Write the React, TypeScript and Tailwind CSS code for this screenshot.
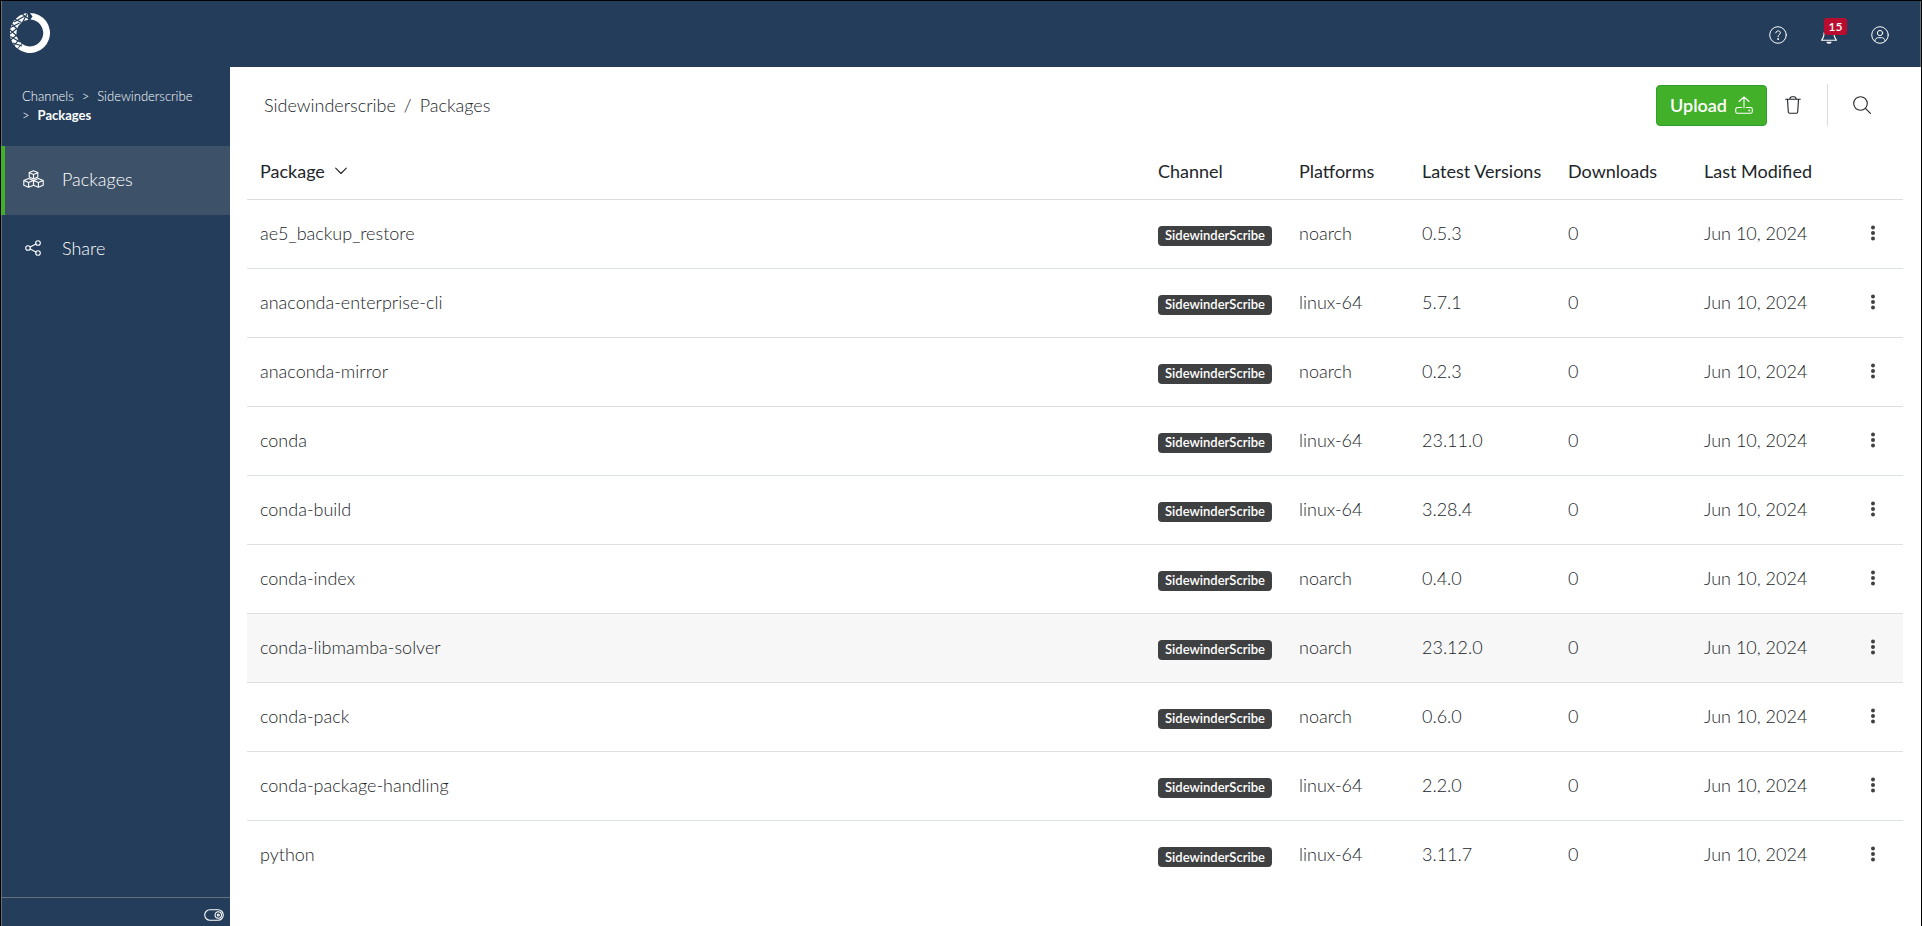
import React from 'react'

interface PackageRow {
  name: string
  platform: string
  version: string
}

const packages: PackageRow[] = [
  { name: 'ae5_backup_restore', platform: 'noarch', version: '0.5.3' },
  { name: 'anaconda-enterprise-cli', platform: 'linux-64', version: '5.7.1' },
  { name: 'anaconda-mirror', platform: 'noarch', version: '0.2.3' },
  { name: 'conda', platform: 'linux-64', version: '23.11.0' },
  { name: 'conda-build', platform: 'linux-64', version: '3.28.4' },
  { name: 'conda-index', platform: 'noarch', version: '0.4.0' },
  { name: 'conda-libmamba-solver', platform: 'noarch', version: '23.12.0' },
  { name: 'conda-pack', platform: 'noarch', version: '0.6.0' },
  { name: 'conda-package-handling', platform: 'linux-64', version: '2.2.0' },
  { name: 'python', platform: 'linux-64', version: '3.11.7' },
]

const activePackage = 'conda-libmamba-solver'

interface IconProps {
  className?: string
  viewBox?: string
  children: React.ReactNode
}

function Icon({ className, viewBox = '0 0 20 20', children }: IconProps) {
  return (
    <svg
      className={className}
      viewBox={viewBox}
      fill="none"
      stroke="currentColor"
      strokeWidth="1.1"
      strokeLinecap="round"
      strokeLinejoin="round"
      aria-hidden="true"
    >
      {children}
    </svg>
  )
}

function Logo() {
  return (
    <svg className="size-10" viewBox="0 0 40 40" aria-hidden="true">
      <path
        d="M20 0 A20 20 0 1 1 8 36 L12.200 31 A13.400 13.400 0 1 0 20.500 6.600 L22.500 3.500 Z"
        fill="#fff"
      />
      <path
        d="M18 3.400 A16.700 16.700 0 0 0 9.500 33"
        fill="none"
        stroke="#fff"
        strokeWidth="6.600"
      />
      <g stroke="#233d5b" strokeWidth="1.200" fill="none">
        <path d="M17.500 0 L12.500 9.500 M12 1 L19.500 6.500 M11.500 9.500 L4.500 6 M15 3 L4 9 M9.500 10 L.5 14.500 M1.500 10.500 L8 17 M7.500 15 L0 21 M0 17 L7.500 23.500 M7.500 21.500 L0 27.500 M.5 23.500 L10 29 M8.500 27 L3 34 M3 30 L12 33" />
      </g>
    </svg>
  )
}

function HelpIcon() {
  return (
    <Icon className="size-[18px]">
      <circle cx="10" cy="10" r="9.200" />
      <path d="M7.500 7.600 C7.600 4.600 12.600 4.600 12.600 7.600 C12.600 9.600 10 9.500 10 12" />
      <circle cx="10" cy="14.500" r=".5" fill="currentColor" />
    </Icon>
  )
}

function BellIcon() {
  return (
    <Icon className="size-[18px]" viewBox="0 0 18 18">
      <path d="M9 1 V2.500 M9 2.500 C5.800 2.500 4 5 4 8 C4 11.500 2.500 12.500 1.500 14.300 H16.500 C15.500 12.500 14 11.500 14 8 C14 5 12.200 2.500 9 2.500 Z" />
      <path d="M7 16.300 C7.600 17.600 10.400 17.600 11 16.300 Z" />
    </Icon>
  )
}

function UserIcon() {
  return (
    <Icon className="size-[18px]">
      <circle cx="10" cy="10" r="9.200" />
      <circle cx="10" cy="7.800" r="2.900" />
      <path d="M4.300 16.500 C4.800 13.800 6.500 13 8.300 13 H11.700 C13.500 13 15.200 13.800 15.700 16.500" />
    </Icon>
  )
}

function CubesIcon() {
  return (
    <Icon className="h-[18px] w-[21px]" viewBox="0 0 21 18">
      <path d="M10.500 .8 L14.800 2.600 V7 L10.500 9 L6.200 7 V2.600 Z M6.400 2.700 L10.500 4.500 L14.600 2.700 M10.500 4.500 V9" />
      <path d="M5.600 8.600 L10.500 10.500 V15.300 L5.600 17.300 L.8 15.300 V10.500 Z M.9 10.600 L5.600 12.500 L10.300 10.600 M5.600 12.500 V17" />
      <path d="M15.400 8.600 L20.200 10.500 V15.300 L15.400 17.300 L10.500 15.300 V10.500 Z M10.600 10.600 L15.400 12.500 L20.100 10.600 M15.400 12.500 V17" />
    </Icon>
  )
}

function ShareIcon() {
  return (
    <Icon className="size-4" viewBox="0 0 16 16">
      <circle cx="3" cy="8" r="2.300" />
      <circle cx="13" cy="3" r="2.300" />
      <circle cx="13" cy="13" r="2.300" />
      <path d="M5.200 7 L10.900 4 M5.200 9 L10.900 12" />
    </Icon>
  )
}

function UploadIcon() {
  return (
    <Icon className="size-[18px]" viewBox="0 0 18 18">
      <path d="M9 12 V1 M4 5.500 L9 .8 L14 5.500" />
      <path d="M6.500 11.500 H2.500 C1.500 11.500 .7 12.300 .7 13.300 V15.500 C.7 16.500 1.500 17.300 2.500 17.300 H15.500 C16.500 17.300 17.300 16.500 17.300 15.500 V13.300 C17.300 12.300 16.500 11.500 15.500 11.500 H11.500" />
      <circle cx="14.300" cy="14.400" r=".4" fill="currentColor" />
    </Icon>
  )
}

function TrashIcon() {
  return (
    <Icon className="h-[18px] w-4" viewBox="0 0 16 18">
      <path d="M.7 3.200 H15.300 M2.500 3.400 L3.300 16 C3.400 16.900 3.900 17.300 4.700 17.300 H11.300 C12.100 17.300 12.600 16.900 12.700 16 L13.500 3.400 M4.800 3 C5 1.500 5.800 .7 7 .7 H9 C10.200 .7 11 1.500 11.200 3" />
    </Icon>
  )
}

function SearchIcon() {
  return (
    <Icon className="size-[18px]" viewBox="0 0 18 18">
      <circle cx="7.500" cy="7.500" r="6.800" />
      <path d="M12.400 12.400 L17.400 17.400" />
    </Icon>
  )
}

function KebabIcon() {
  return (
    <svg className="size-4" viewBox="0 0 16 16" fill="currentColor" aria-hidden="true">
      <circle cx="8" cy="2.500" r="2" />
      <circle cx="8" cy="8" r="2" />
      <circle cx="8" cy="13.500" r="2" />
    </svg>
  )
}

function TopBar() {
  return (
    <header className="flex h-[66px] shrink-0 items-center justify-between border-x border-[#66707a] bg-[#233d5b] pr-[31px] pb-0.5 pl-2 text-white">
      <a href="#home" aria-label="Home">
        <Logo />
      </a>
      <div className="flex items-center gap-[33px] pt-1">
        <button type="button" aria-label="Help">
          <HelpIcon />
        </button>
        <button type="button" aria-label="Notifications" className="relative">
          <BellIcon />
          <span className="absolute -top-2 left-1 flex h-[17px] w-[23px] items-center justify-center rounded-[3px] bg-[#ba0c2f] text-xs font-semibold">
            15
          </span>
        </button>
        <button type="button" aria-label="Account">
          <UserIcon />
        </button>
      </div>
    </header>
  )
}

function Sidebar() {
  return (
    <aside className="flex w-[229px] shrink-0 flex-col border-l border-[#66707a] bg-[#233d5b] text-white">
      <nav
        aria-label="Channel path"
        className="h-[79px] pt-5 pl-5 text-[13px] leading-[19px] font-light"
      >
        <div className="flex gap-2">
          <a href="#channels">Channels</a>
          <span>&gt;</span>
          <a href="#sidewinderscribe">Sidewinderscribe</a>
        </div>
        <div className="flex gap-2">
          <span>&gt;</span>
          <a href="#packages" className="font-bold">
            Packages
          </a>
        </div>
      </nav>
      <nav aria-label="Channel sections" className="flex flex-1 flex-col text-lg font-light">
        <a
          href="#packages"
          className="-ml-px flex h-[69px] items-center border-l-4 border-[#43b02a] bg-[#3d5269] pb-1 pl-[18px]"
        >
          <span className="flex w-[39px]">
            <CubesIcon />
          </span>
          Packages
        </a>
        <a href="#share" className="flex h-[69px] items-center pb-1 pl-[23px]">
          <span className="flex w-[37px]">
            <ShareIcon />
          </span>
          Share
        </a>
      </nav>
      <div className="flex h-[29px] items-end justify-end border-t border-[#66707a] pr-1.5 pb-[5px]">
        <button type="button" aria-label="Collapse sidebar">
          <Icon className="h-3 w-5" viewBox="0 0 20 12">
            <rect x=".7" y=".7" width="18.600" height="10.600" rx="5.300" />
            <circle cx="14.300" cy="6" r="3.200" />
            <circle cx="14.300" cy="6" r="1" />
          </Icon>
        </button>
      </div>
    </aside>
  )
}

function Toolbar() {
  return (
    <div className="flex h-[76px] items-center pr-8 pl-[17px] text-[#212529]">
      <nav aria-label="Breadcrumb" className="flex flex-1 gap-2 text-lg font-light">
        <a href="#sidewinderscribe">Sidewinderscribe</a>
        <span>/</span>
        <span>Packages</span>
      </nav>
      <button
        type="button"
        className="flex h-[41px] w-[111px] items-center justify-center gap-2 rounded border border-[#2f9e2c] bg-[#43b02a] text-lg font-semibold text-white"
      >
        Upload
        <UploadIcon />
      </button>
      <button type="button" aria-label="Delete" className="ml-[18px]">
        <TrashIcon />
      </button>
      <div className="mr-[25px] ml-[26px] h-[42px] w-px bg-[#dcdddf]" />
      <button type="button" aria-label="Search">
        <SearchIcon />
      </button>
    </div>
  )
}

function PackageTable() {
  return (
    <table className="w-full table-fixed text-left text-lg text-[#212529]">
      <thead>
        <tr className="h-14 border-b border-[#dcdddf] *:px-[13px] *:font-normal">
          <th>
            <button type="button" className="flex items-center gap-2.5">
              Package
              <Icon className="h-2 w-3" viewBox="0 0 12 8">
                <path d="M.7 1.200 L6 6.500 L11.300 1.200" />
              </Icon>
            </button>
          </th>
          <th className="w-[141px]">Channel</th>
          <th className="w-[123px]">Platforms</th>
          <th className="w-[146px]">Latest Versions</th>
          <th className="w-[136px]">Downloads</th>
          <th className="w-[152px]">Last Modified</th>
          <th className="w-[60px]" aria-label="Actions" />
        </tr>
      </thead>
      <tbody className="font-light">
        {packages.map(({ name, platform, version }) => (
          <tr
            key={name}
            className={`h-[69px] border-b border-[#dce0e5] *:px-[13px] *:pb-0.5 last:border-b-0 ${
              name === activePackage ? 'bg-[#f7f7f7]' : ''
            }`}
          >
            <td>{name}</td>
            <td>
              <span className="mt-1.5 flex h-5 w-[114px] items-center justify-center rounded bg-[#3f4042] text-[13px] font-semibold text-white">
                SidewinderScribe
              </span>
            </td>
            <td>{platform}</td>
            <td>{version}</td>
            <td>0</td>
            <td>Jun 10, 2024</td>
            <td>
              <button
                type="button"
                aria-label={`Actions for ${name}`}
                className="mx-auto block text-[#3f4042]"
              >
                <KebabIcon />
              </button>
            </td>
          </tr>
        ))}
      </tbody>
    </table>
  )
}

export default function App() {
  return (
    <div className="flex min-h-screen flex-col border-x border-t border-black bg-white font-['Lato',sans-serif]">
      <TopBar />
      <div className="flex flex-1">
        <Sidebar />
        <main className="min-w-0 flex-1 pr-[18px] pl-[17px]">
          <Toolbar />
          <PackageTable />
        </main>
      </div>
    </div>
  )
}
